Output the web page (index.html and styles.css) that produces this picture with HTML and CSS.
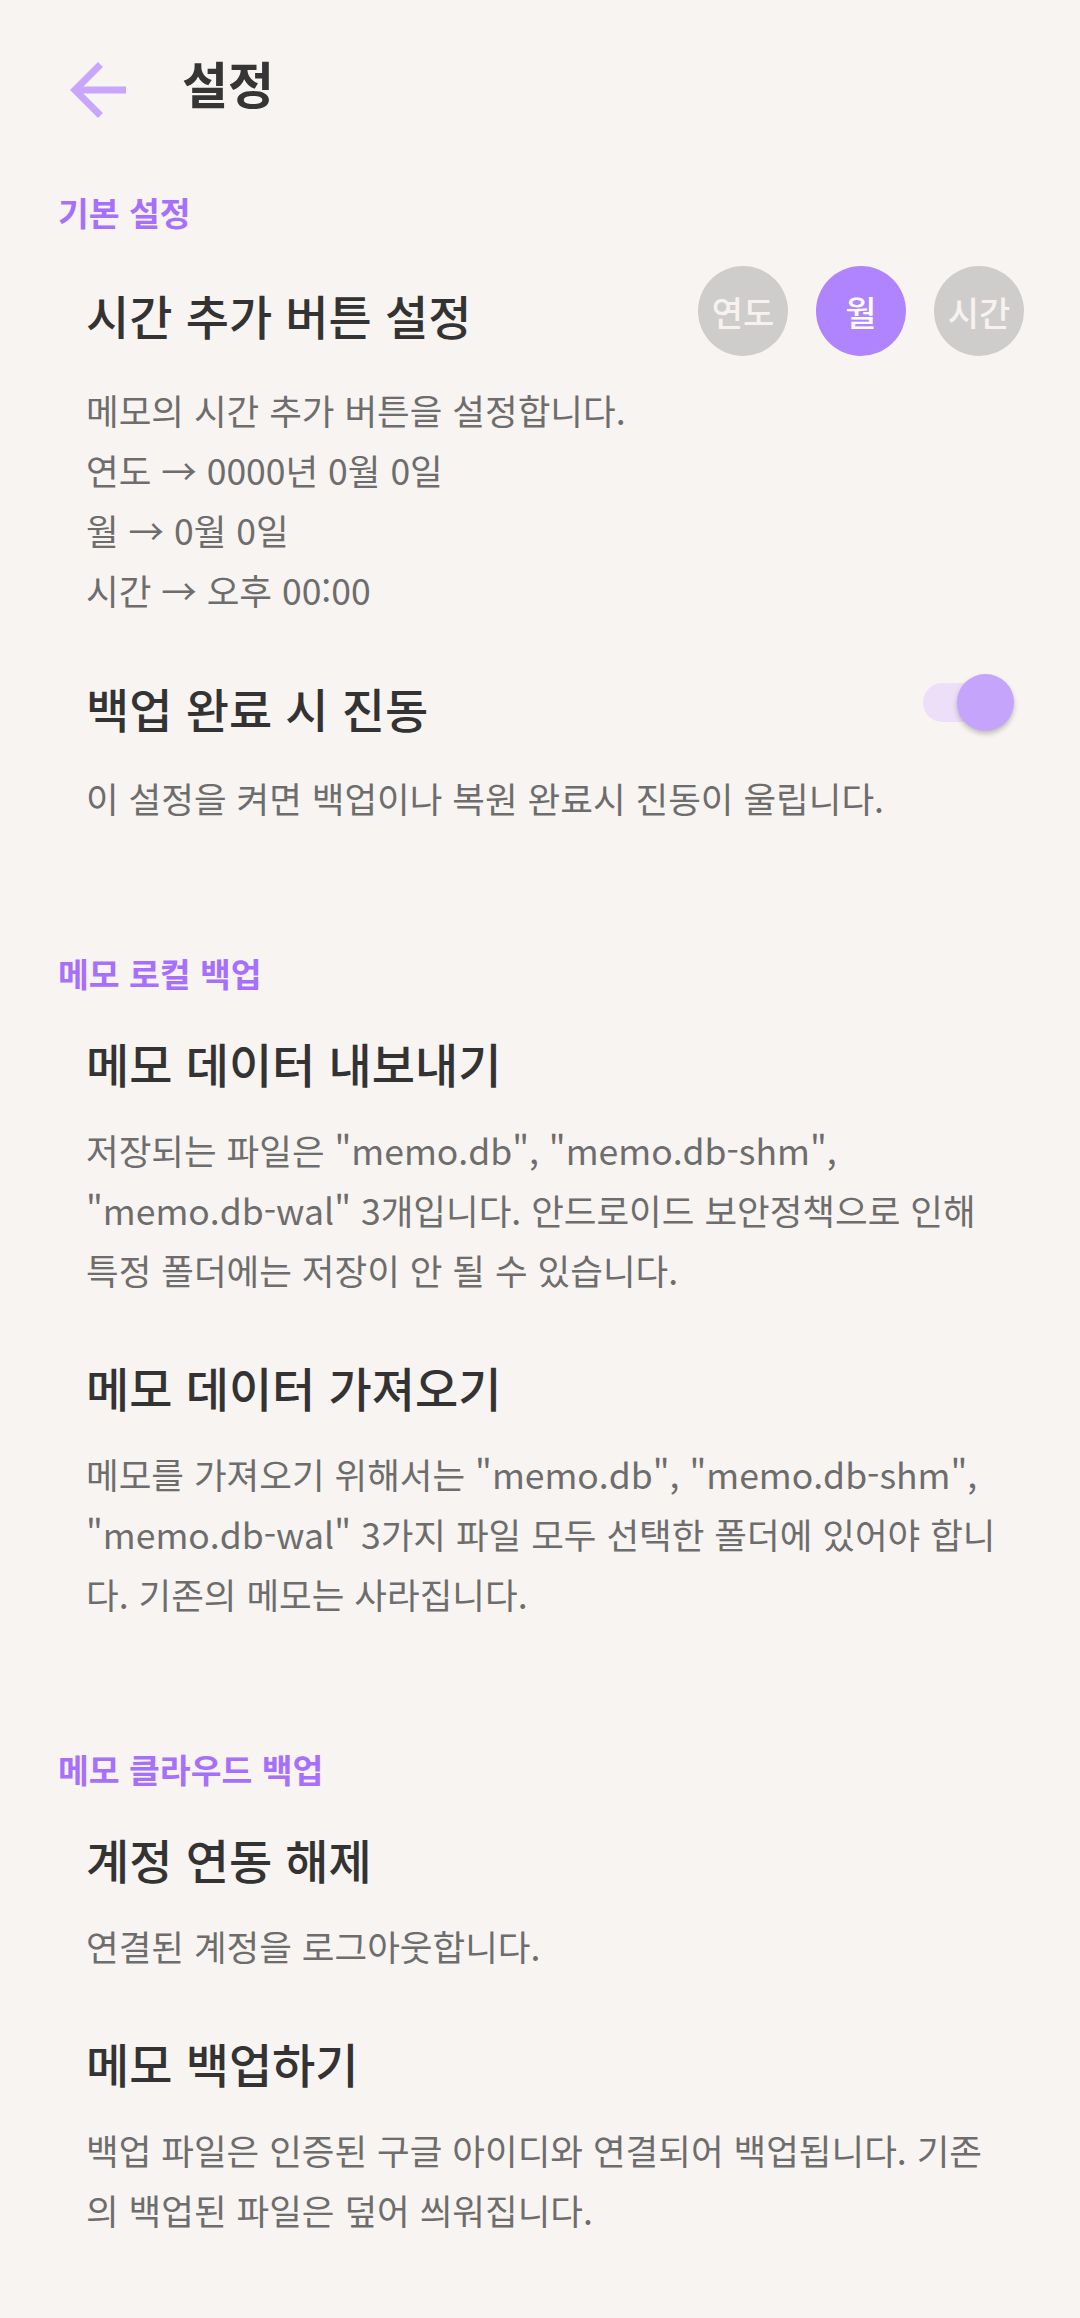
FILE: index.html
```html
<!DOCTYPE html>
<html lang="ko">
<head>
<meta charset="utf-8">
<title>설정</title>
<link rel="stylesheet" href="styles.css">
</head>
<body>
<header class="appbar">
  <svg class="back" viewBox="0 0 24 24" aria-hidden="true"><path d="M20 11H7.83l5.59-5.59L12 4l-8 8 8 8 1.41-1.41L7.83 13H20v-2z"/></svg>
  <h1 class="appbar-title">설정</h1>
</header>
<main class="settings">
  <section class="group">
    <h2 class="group-title">기본 설정</h2>
    <div class="item item--choices">
      <div class="item-head">
        <h3 class="item-title">시간 추가 버튼 설정</h3>
        <div class="chips">
          <span class="chip">연도</span>
          <span class="chip chip--on">월</span>
          <span class="chip">시간</span>
        </div>
      </div>
      <p class="item-desc">메모의 시간 추가 버튼을 설정합니다.<br>연도 → 0000년 0월 0일<br>월 → 0월 0일<br>시간 → 오후 00:00</p>
    </div>
    <div class="item">
      <div class="item-head">
        <h3 class="item-title">백업 완료 시 진동</h3>
        <div class="switch"><span class="switch-track"></span><span class="switch-thumb"></span></div>
      </div>
      <p class="item-desc">이 설정을 켜면 백업이나 복원 완료시 진동이 울립니다.</p>
    </div>
  </section>
  <section class="group">
    <h2 class="group-title">메모 로컬 백업</h2>
    <div class="item">
      <div class="item-head"><h3 class="item-title">메모 데이터 내보내기</h3></div>
      <p class="item-desc">저장되는 파일은 "memo.db", "memo.db-shm",<br>"memo.db-wal" 3개입니다. 안드로이드 보안정책으로 인해<br>특정 폴더에는 저장이 안 될 수 있습니다.</p>
    </div>
    <div class="item">
      <div class="item-head"><h3 class="item-title">메모 데이터 가져오기</h3></div>
      <p class="item-desc">메모를 가져오기 위해서는 "memo.db", "memo.db-shm",<br>"memo.db-wal" 3가지 파일 모두 선택한 폴더에 있어야 합니<br>다. 기존의 메모는 사라집니다.</p>
    </div>
  </section>
  <section class="group">
    <h2 class="group-title">메모 클라우드 백업</h2>
    <div class="item">
      <div class="item-head"><h3 class="item-title">계정 연동 해제</h3></div>
      <p class="item-desc">연결된 계정을 로그아웃합니다.</p>
    </div>
    <div class="item">
      <div class="item-head"><h3 class="item-title">메모 백업하기</h3></div>
      <p class="item-desc">백업 파일은 인증된 구글 아이디와 연결되어 백업됩니다. 기존<br>의 백업된 파일은 덮어 씌워집니다.</p>
    </div>
  </section>
</main>
</body>
</html>
```
FILE: styles.css
```css
html, body {
  margin: 0;
  padding: 0;
  background: #f8f4f1;
}
body {
  font-family: "Noto Sans CJK KR", "Noto Sans", sans-serif;
  color: #333333;
  width: 1080px;
  min-height: 2318px;
}
.appbar {
  height: 180px;
  display: flex;
  align-items: center;
  padding-left: 56px;
  box-sizing: border-box;
}
.back {
  width: 84px;
  height: 84px;
  fill: #c8a6fd;
  flex: none;
}
.appbar-title {
  margin: 0 0 16px 42px;
  font-size: 50px;
  line-height: 1;
  font-weight: 700;
  color: #353535;
}
.settings {
  padding-top: 10px;
}
.group + .group {
  margin-top: 123px;
}
.group-title {
  margin: 0;
  padding-left: 58px;
  font-size: 33.5px;
  line-height: 44px;
  font-weight: 700;
  color: #a670fd;
}
.item {
  padding: 0 56px 0 86px;
  margin-top: 57px;
}
.group-title + .item {
  margin-top: 38px;
}
.group-title + .item--choices {
  margin-top: 32px;
}
.item-head {
  display: flex;
  align-items: center;
  justify-content: space-between;
  min-height: 60px;
}
.item-title {
  margin: 0;
  font-size: 47px;
  line-height: 60px;
  font-weight: 500;
  color: #333333;
}
.item--choices .item-head {
  height: 90px;
}
.item--choices .item-title {
  padding-top: 8px;
}
.item-desc {
  margin: 27px 0 0;
  font-size: 35.5px;
  line-height: 60px;
  color: #6d6d6d;
  white-space: nowrap;
}
.item--choices .item-desc {
  margin-top: 24px;
}
.item--choices + .item {
  margin-top: 54px;
}
.chips {
  display: flex;
  gap: 28px;
}
.chip {
  width: 90px;
  height: 90px;
  border-radius: 50%;
  background: #cfcdcb;
  color: #f7f2ef;
  font-size: 34px;
  font-weight: 500;
  display: flex;
  align-items: center;
  justify-content: center;
}
.chip--on {
  background: #b084ff;
  color: #ffffff;
}
.switch {
  position: relative;
  width: 91px;
  height: 57px;
  margin: 0 10px 10px 0;
  flex: none;
}
.switch-track {
  position: absolute;
  left: 0;
  top: 9px;
  width: 83px;
  height: 39px;
  border-radius: 20px;
  background: #ecdff7;
}
.switch-thumb {
  position: absolute;
  right: 0;
  top: 0;
  width: 57px;
  height: 57px;
  border-radius: 50%;
  background: #c4a5fb;
  box-shadow: 0 3px 5px rgba(0, 0, 0, 0.22);
}
```
